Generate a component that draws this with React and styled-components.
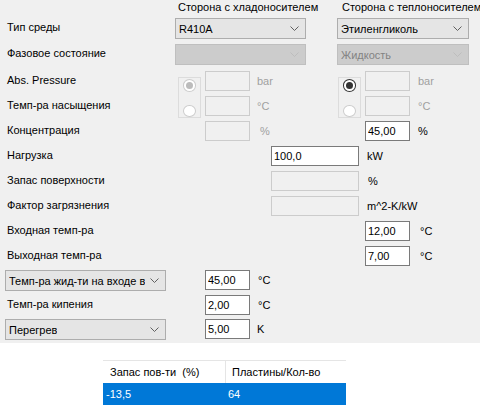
import React from 'react';
import styled, { createGlobalStyle } from 'styled-components';

const GlobalStyle = createGlobalStyle`
  html, body {
    margin: 0;
    padding: 0;
    background: #ffffff;
    overflow: hidden;
  }
`;

const Chevron = ({ muted }) => (
  <svg width="9" height="5" viewBox="0 0 9 5">
    <path d="M0.5 0.5 L4.5 4.5 L8.5 0.5" fill="none" stroke={muted ? '#bdbdbd' : '#606060'} strokeWidth="1" />
  </svg>
);

const Dropdown = ({ value, disabled, col, row }) => (
  <Combo $col={col} $row={row} $disabled={disabled}>
    <ComboText>{value}</ComboText>
    <Chevron muted={disabled} />
  </Combo>
);

const App = () => {
  return (
    <>
      <GlobalStyle />
      <Page>
        <Form>
          <Header $col="lr / rc" $row="1">Сторона с хладоносителем</Header>
          <Header $col="rr / e" $row="1" $pad={4}>Сторона с теплоносителем</Header>

          <Label $row="2">Тип среды</Label>
          <Dropdown value="R410A" col="lc / lc-e" row="2" />
          <Dropdown value="Этиленгликоль" col="rc / rc-e" row="2" />

          <Label $row="3">Фазовое состояние</Label>
          <Dropdown value="" disabled col="lc / lc-e" row="3" />
          <Dropdown value="Жидкость" disabled col="rc / rc-e" row="3" />

          <Label $row="4">Abs. Pressure</Label>
          <RadioBox $col="lr / lr-e">
            <Radio $checked $disabled />
            <Radio $disabled />
          </RadioBox>
          <Field $col="li / li-e" $row="4" disabled />
          <Unit $col="lu / wi" $row="4" $muted>bar</Unit>
          <RadioBox $col="rr / rr-e">
            <Radio $checked />
            <Radio $disabled />
          </RadioBox>
          <Field $col="ri / ri-e" $row="4" disabled />
          <Unit $col="ru / rc-e" $row="4" $muted>bar</Unit>

          <Label $row="5">Темп-ра насыщения</Label>
          <Field $col="li / li-e" $row="5" disabled />
          <Unit $col="lu / wi" $row="5" $muted>°C</Unit>
          <Field $col="ri / ri-e" $row="5" disabled />
          <Unit $col="ru / rc-e" $row="5" $muted>°C</Unit>

          <Label $row="6">Концентрация</Label>
          <Field $col="li / li-e" $row="6" disabled />
          <Unit $col="lu / wi" $row="6" $muted $shift={3}>%</Unit>
          <Field $col="ri / ri-e" $row="6" readOnly value="45,00" />
          <Unit $col="ru / rc-e" $row="6">%</Unit>

          <Label $row="7">Нагрузка</Label>
          <Field $col="wi / wi-e" $row="7" readOnly value="100,0" />
          <Unit $col="wu / rc-e" $row="7">kW</Unit>

          <Label $row="8">Запас поверхности</Label>
          <Field $col="wi / wi-e" $row="8" disabled />
          <Unit $col="wu / rc-e" $row="8" $shift={1}>%</Unit>

          <Label $row="9">Фактор загрязнения</Label>
          <Field $col="wi / wi-e" $row="9" disabled />
          <Unit $col="wu / rc-e" $row="9">m^2-K/kW</Unit>

          <Label $row="10">Входная темп-ра</Label>
          <Field $col="ri / ri-e" $row="10" readOnly value="12,00" />
          <Unit $col="ru / rc-e" $row="10" $shift={2}>°C</Unit>

          <Label $row="11">Выходная темп-ра</Label>
          <Field $col="ri / ri-e" $row="11" readOnly value="7,00" />
          <Unit $col="ru / rc-e" $row="11" $shift={2}>°C</Unit>

          <Dropdown value="Темп-ра жид-ти на входе в" col="bc / bc-e" row="12" />
          <Field $col="li / li-e" $row="12" readOnly value="45,00" />
          <Unit $col="lu / wi" $row="12" $shift={1}>°C</Unit>

          <Label $row="13">Темп-ра кипения</Label>
          <Field $col="li / li-e" $row="13" readOnly value="2,00" />
          <Unit $col="lu / wi" $row="13" $shift={1}>°C</Unit>

          <Dropdown value="Перегрев" col="bc / bc-e" row="14" />
          <Field $col="li / li-e" $row="14" readOnly value="5,00" />
          <Unit $col="lu / wi" $row="14">K</Unit>
        </Form>

        <Results>
          <Table>
            <HeadCell>Запас пов-ти&nbsp; (%)</HeadCell>
            <HeadCell $divider>Пластины/Кол-во</HeadCell>
            <RowCell>-13,5</RowCell>
            <RowCell>64</RowCell>
          </Table>
        </Results>
      </Page>
    </>
  );
};

// ========== STYLED COMPONENTS ========== //
const Page = styled.div`
  width: 480px;
  height: 409px;
  display: flex;
  flex-direction: column;
  font-family: "Liberation Sans", Arial, sans-serif;
  font-size: 11px;
  color: #000000;
`;

const Form = styled.div`
  display: grid;
  background: #f0f0f0;
  grid-template-columns:
    [s] 5px [bc] 161px [bc-e] 9px [lc] 3px [lr] 23px [lr-e] 4px [li] 45px [li-e] 7px
    [lu] 14px [wi] 35px [lc-e] 31px [rc] 1px [rr] 21px [wi-e] 2px [rr-e] 4px [ri] 2px
    [wu] 43px [ri-e] 8px [ru] 51px [rc-e] 11px [e];
  grid-template-rows: 18px 26px 27px 25px 25px 25px 25px 25px 25px 25px 24px 25px 24px 24px;
  height: 343px;
`;

const Header = styled.div`
  grid-column: ${(p) => p.$col};
  grid-row: ${(p) => p.$row};
  padding-left: ${(p) => p.$pad || 0}px;
  line-height: 15px;
  white-space: nowrap;
`;

const Label = styled.div`
  grid-column: s / lc;
  grid-row: ${(p) => p.$row};
  align-self: start;
  padding-left: 7px;
  line-height: 19px;
  white-space: nowrap;
`;

const Combo = styled.div`
  grid-column: ${(p) => p.$col};
  grid-row: ${(p) => p.$row};
  align-self: start;
  box-sizing: border-box;
  height: 21px;
  display: flex;
  align-items: center;
  justify-content: space-between;
  gap: 4px;
  padding: 0 6px 0 3px;
  background: ${(p) => (p.$disabled ? '#cccccc' : '#e5e5e5')};
  border: 1px solid ${(p) => (p.$disabled ? '#bfbfbf' : '#adadad')};
  color: ${(p) => (p.$disabled ? '#838383' : '#000000')};
  white-space: nowrap;

  svg {
    flex-shrink: 0;
  }
`;

const ComboText = styled.span`
  min-width: 0;
  overflow: hidden;
`;

const Field = styled.input`
  grid-column: ${(p) => p.$col};
  grid-row: ${(p) => p.$row};
  align-self: start;
  box-sizing: border-box;
  width: 100%;
  height: 20px;
  margin: 0;
  padding: 0 2px;
  font: inherit;
  color: #000000;
  outline: none;
  background: ${(p) => (p.disabled ? '#f0f0f0' : '#ffffff')};
  border: 1px solid ${(p) => (p.disabled ? '#cccccc' : '#7a7a7a')};
`;

const Unit = styled.div`
  grid-column: ${(p) => p.$col};
  grid-row: ${(p) => p.$row};
  align-self: start;
  padding-left: ${(p) => p.$shift || 0}px;
  line-height: 20px;
  white-space: nowrap;
  color: ${(p) => (p.$muted ? '#a0a0a0' : '#000000')};
`;

const RadioBox = styled.div`
  grid-column: ${(p) => p.$col};
  grid-row: 4 / 6;
  align-self: start;
  box-sizing: border-box;
  margin-top: 6px;
  height: 41px;
  border: 1px solid #dcdcdc;
  display: flex;
  flex-direction: column;
  align-items: center;
  gap: 13px;
  padding-top: 1px;
`;

const Radio = styled.span`
  position: relative;
  box-sizing: border-box;
  width: 13px;
  height: 13px;
  border-radius: 50%;
  background: #ffffff;
  border: 1px solid ${(p) => (p.$disabled ? '#cccccc' : '#333333')};
  ${(p) =>
    p.$checked &&
    `
    &::after {
      content: '';
      position: absolute;
      left: 2px;
      top: 2px;
      width: 7px;
      height: 7px;
      border-radius: 50%;
      background: ${p.$disabled ? '#bcbcbc' : '#333333'};
    }
  `}
`;

const Results = styled.div`
  flex: 1;
  background: #ffffff;
  padding: 17px 0 0 103px;
`;

const Table = styled.div`
  display: grid;
  grid-template-columns: 122px 121px;
  grid-template-rows: 22px 22px;
  width: 243px;
  border-top: 1px solid #e5e5e5;
`;

const HeadCell = styled.div`
  padding-left: ${(p) => (p.$divider ? 6 : 7)}px;
  line-height: 22px;
  white-space: nowrap;
  border-left: ${(p) => (p.$divider ? '1px solid #e5e5e5' : 'none')};
`;

const RowCell = styled.div`
  background: #0078d7;
  color: #ffffff;
  padding-left: 3px;
  line-height: 22px;
`;

export default App;
